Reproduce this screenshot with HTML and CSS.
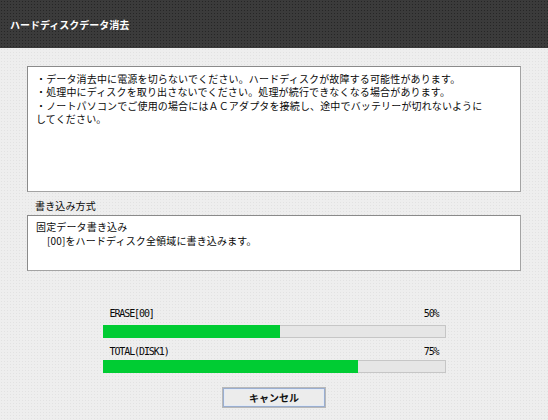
FILE: index.html
```html
<!DOCTYPE html>
<html lang="ja">
<head>
  <meta charset="UTF-8">
  <title>ハードディスクデータ消去</title>
  <link rel="stylesheet" href="styles.css">
</head>
<body>
  <div class="titlebar">ハードディスクデータ消去</div>

  <div class="content">
    <div class="notice">
      <p>・データ消去中に電源を切らないでください。ハードディスクが故障する可能性があります。</p>
      <p>・処理中にディスクを取り出さないでください。処理が続行できなくなる場合があります。</p>
      <p>・ノートパソコンでご使用の場合にはＡＣアダプタを接続し、途中でバッテリーが切れないように<br>してください。</p>
    </div>

    <div class="label">書き込み方式</div>
    <div class="method">
      <p>固定データ書き込み</p>
      <p class="indent">[00]をハードディスク全領域に書き込みます。</p>
    </div>

    <div class="progress">
      <div class="progress-head">
        <span>ERASE[00]</span>
        <span>50%</span>
      </div>
      <div class="track"><div class="fill" style="width: 52%"></div></div>

      <div class="progress-head second">
        <span>TOTAL(DISK1)</span>
        <span>75%</span>
      </div>
      <div class="track last"><div class="fill" style="width: 75%"></div></div>
    </div>

    <div class="actions">
      <button class="btn">キャンセル</button>
    </div>
  </div>
</body>
</html>
```

FILE: styles.css
```css
body {
  margin: 0;
  width: 548px;
  height: 420px;
  overflow: hidden;
  font-family: "Noto Sans CJK JP", sans-serif;
  font-size: 10px;
  letter-spacing: 0.15px;
  color: #0a0a0a;
  background-color: #eeeeee;
  background-image: radial-gradient(rgba(0,0,0,0.05) 0.7px, transparent 1px);
  background-size: 3px 3px;
}
p {
  margin: 0;
}

.titlebar {
  height: 48px;
  box-sizing: border-box;
  padding: 0 0 0 10px;
  display: flex;
  align-items: center;
  color: #fff;
  font-weight: bold;
  font-size: 10px;
  letter-spacing: 0;
  background-color: #3b3b3b;
  background-image: radial-gradient(rgba(0,0,0,0.35) 0.7px, transparent 1px);
  background-size: 3px 3px;
}

.content {
  padding: 18px 27px 0 27px;
}

.notice, .method {
  background: #fff;
  border: 1px solid #a3a3a3;
  border-top-color: #8a8a8a;
  border-left-color: #8a8a8a;
  box-sizing: border-box;
}
.notice {
  height: 126px;
  padding: 5px 8px;
  line-height: 13.4px;
}

.label {
  margin: 7px 0 2px 8px;
  line-height: 14px;
}

.method {
  height: 56px;
  padding: 4px 8px;
  line-height: 14px;
}
.method .indent {
  padding-left: 11px;
}

.progress {
  width: 343px;
  margin: 36px auto 0 auto;
}
.progress-head {
  display: flex;
  justify-content: space-between;
  padding: 0 7px;
  line-height: 14px;
  margin-bottom: 4px;
  font-family: "DejaVu Sans Mono", monospace;
  font-size: 10px;
  letter-spacing: -1.1px;
}
.progress-head.second {
  margin-top: 7px;
  margin-bottom: 1px;
}
.track {
  height: 13px;
  box-sizing: border-box;
  background: #e6e6e6;
  border: 1px solid #c6c6c6;
  position: relative;
}
.fill {
  position: absolute;
  left: -1px;
  top: -1px;
  bottom: -1px;
  background: #00cc33;
}

.actions {
  display: flex;
  justify-content: center;
  margin-top: 15px;
}
.btn {
  width: 102px;
  height: 19px;
  padding: 0;
  font-family: "Noto Sans CJK JP", sans-serif;
  font-size: 10px;
  font-weight: bold;
  letter-spacing: 0;
  color: #111;
  background: #ececec;
  border: 1px solid #9aaed0;
  outline: 1px solid #b8b8b8;
  box-shadow: inset 0 0 0 1px #e4ebf6;
}
```
